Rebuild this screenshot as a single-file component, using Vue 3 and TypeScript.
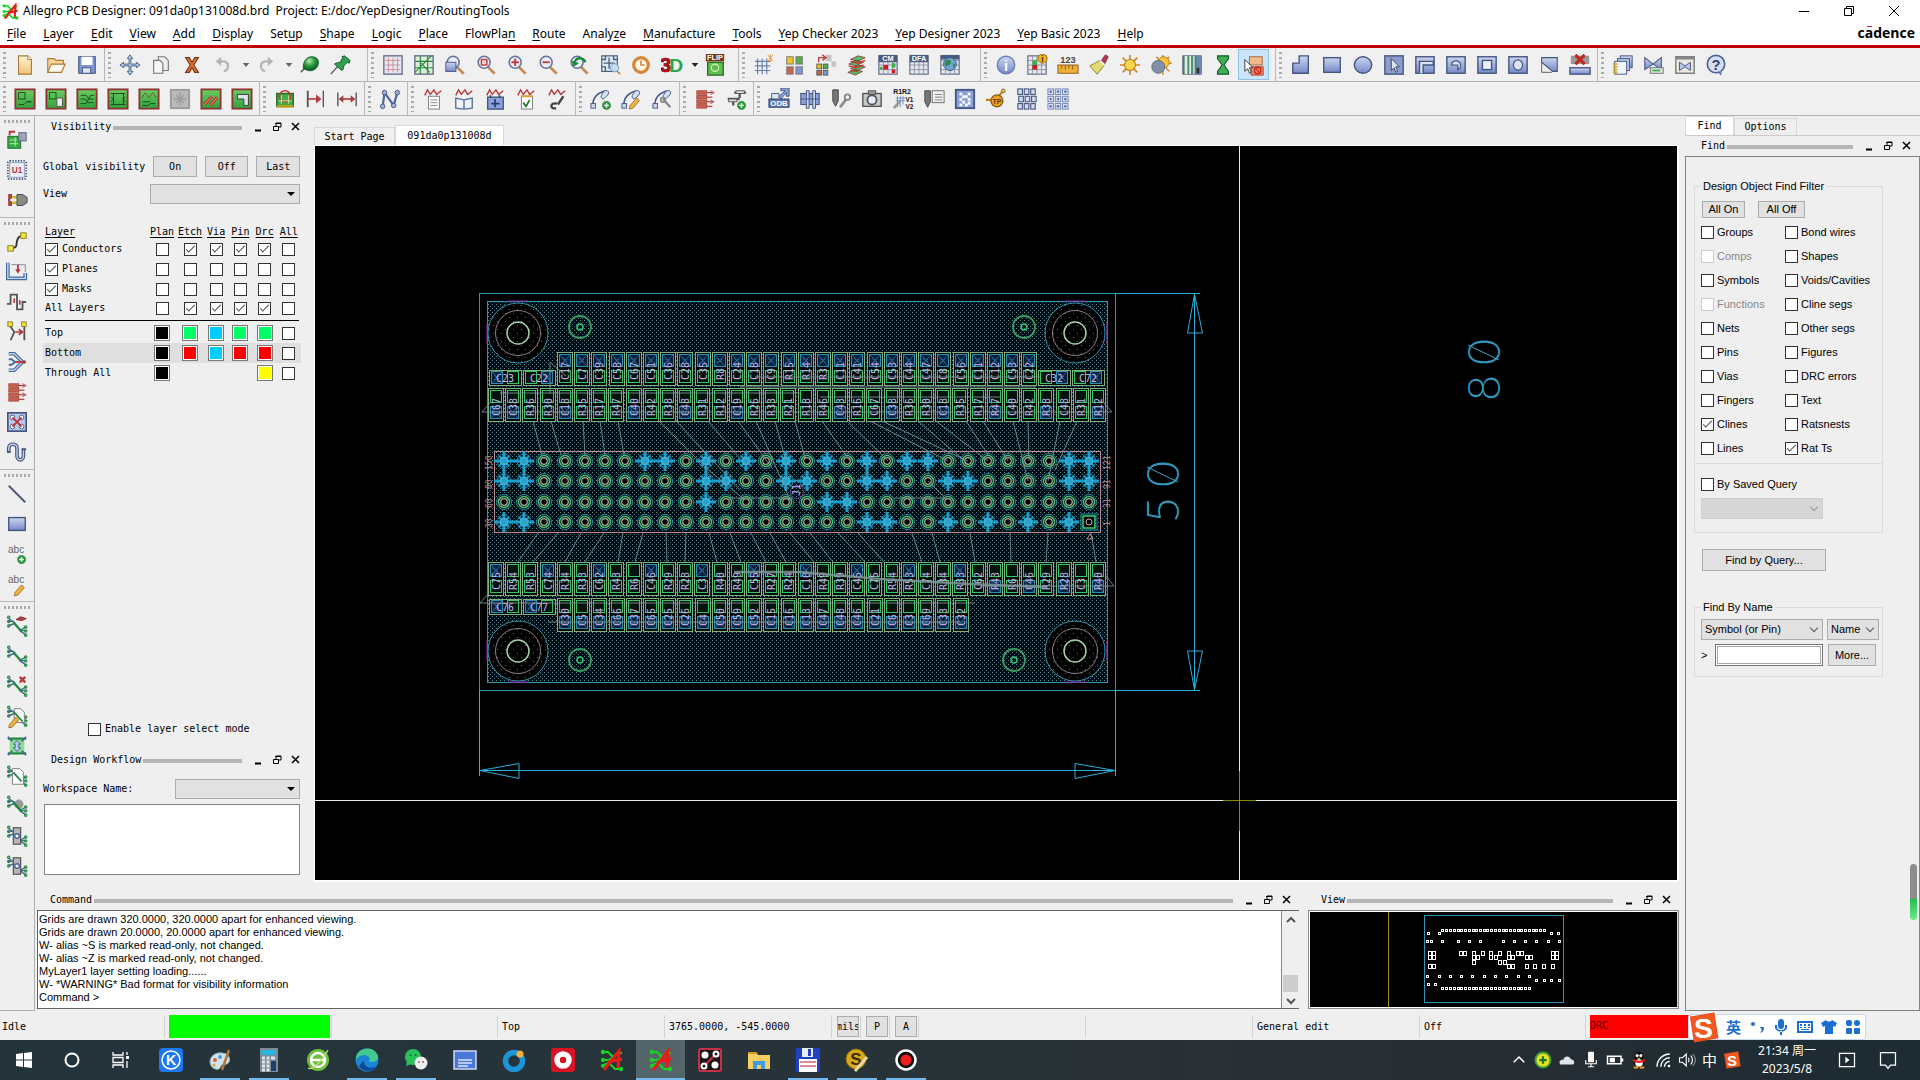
<script setup lang="ts">
import { ref } from 'vue'

/* ---------- small svg helpers for the icon set ---------- */
const R = (x: number, y: number, w: number, h: number, f = 'none', s = 'none', sw = 1) =>
  `<rect x="${x}" y="${y}" width="${w}" height="${h}" fill="${f}" stroke="${s}" stroke-width="${sw}"/>`
const P = (d: string, s = 'none', sw = 1, f = 'none') =>
  `<path d="${d}" fill="${f}" stroke="${s}" stroke-width="${sw}"/>`
const C = (x: number, y: number, r: number, f = 'none', s = 'none', sw = 1) =>
  `<circle cx="${x}" cy="${y}" r="${r}" fill="${f}" stroke="${s}" stroke-width="${sw}"/>`
const T = (x: number, y: number, t: string, z: number, f: string, w = 700) =>
  `<text x="${x}" y="${y}" font-size="${z}" fill="${f}" font-weight="${w}" text-anchor="middle" font-family="Liberation Sans, sans-serif">${t}</text>`

const BLU = 'url(#gBlue)'
const NAVY = '#44557f'
const RED = '#b23a3a'
const GRN = '#1f8a3a'
const pcb = R(1.5, 1.5, 21, 21, 'url(#gGreen)', '#8f3434', 2)
const lens = P('M13.500 13.500l8 8', '#c58a55', 3) + C(10, 9, 6.500, '#e9edf8', '#66749c', 1.700)
const plus = (x: number, y: number) => C(x, y, 4.500, '#2c9a3c', '#1b6e2b', 0.500) + P(`M${x - 2.500} ${y}h5M${x} ${y - 2.500}v5`, '#fff', 1.500)
const pencil = (x: number, y: number) => P(`M${x} ${y}l7-8 3 3-7 8-4 1z`, '#8a5a20', 0.800, '#f2b23a')
const wave = P('M3 8l3-6 3 5 4-5 3 5 5-4', RED, 1.500)
const sheet = R(7, 9, 12, 14, '#fff', '#777')
const grid = R(2, 2, 20, 20, '#e8e8ec', '#66708c', 1.300) + P('M2 7h20M2 12h20M2 17h20M7 2v20M12 2v20M17 2v20', '#8c93a6', 1)
const curve = P('M3 19C3 9 9 5 17 3', NAVY, 1.600) + R(1, 17, 5, 5, '#cdd6f0', NAVY) + P('M12 10c1-5 4-8 7-7s1 6-5 9z', NAVY, 1, '#d5ddf2')
const fan = (diag = GRN) =>
  P('M2 3l8 6M2 7h7M2 12l8-3', '#4b689c', 1.500) + P('M15 17h7M15 17l7-4M15 17l7 5', '#4b689c', 1.500) + P('M8 8l9 10', diag, 2.500) +
  [2.5, 7, 12].map(y => C(3, y, 1.300, 'none', GRN, 1.200)).join('') + [13, 17.5, 22].map(y => C(21.500, y, 1.300, 'none', GRN, 1.200)).join('')

const ic: Record<string, string> = {
  new: P('M5 2h10l4 4v16H5z', '#a97a35', 1.200, 'url(#gOrange)') + P('M15 2v4h4', '#a97a35', 1, '#fff'),
  open: P('M3 20V5h7l2 2h8v4', '#a97a35', 1.200, '#f6d59a') + P('M3 20l4-9h15l-4 9z', '#a97a35', 1.200, '#fffaf0'),
  save: R(3, 3, 18, 18, '#7d97d3', '#44557f', 1.200) + R(6, 3, 12, 9, '#fff') + R(7, 15, 9, 6, '#dfe4ef', '#44557f'),
  move: P('M12 1l3 4h-2v6h6V9l4 3-4 3v-2h-6v6h2l-3 4-3-4h2v-6H5v2l-4-3 4-3v2h6V5H9z', '#3f5c80', 1, '#bcd0e4'),
  copy: P('M9 3h7l4 4v11H9z', '#777', 1.200, '#eee') + P('M4 7h7l3 3v11H4z', '#777', 1.200, '#f6f6f6'),
  del: P('M5 4h4l3 5 3-5h4l-5 8 5 8h-4l-3-5-3 5H5l5-8z', '#7c3514', 1.200, '#d96f2e'),
  undo: P('M6 8h7c6 1 6 9 0 11', '#b5b5b5', 2.500) + P('M10 3L4 8l6 5z', 'none', 0, '#b5b5b5'),
  redo: P('M18 8h-7c-6 1-6 9 0 11', '#b5b5b5', 2.500) + P('M14 3l6 5-6 5z', 'none', 0, '#b5b5b5'),
  down: P('M7 9h10l-5 6z', 'none', 0, '#666'),
  downk: P('M7 9h10l-5 6z', 'none', 0, '#222'),
  ball: P('M3 20l6-6', '#555', 1.500) + P('M6 16c-1-4 1-13 9-13 6 0 8 4 7 8-1 6-7 8-11 7z', '#0c5c28', 1, 'url(#gBall)'),
  pin: P('M2 22l8-9', '#555', 1.500) + P('M6 11c2-2 5-1 6-2l3-5-1-1 3-1 6 5-1 3-2-1-4 4c0 2 0 4-2 5z', '#0c5c28', 1, '#2fa04e'),
  g1: R(2, 2, 20, 20, '#e9e6ee', '#66708c', 1.500) + P('M7 4v16M12 4v16M17 4v16M4 7h16M4 12h16M4 17h16', '#c98d95', 1),
  g2: R(2, 2, 20, 20, '#dfeadf', '#66708c', 1.500) + P('M2 8h20M2 15h20M8 2v20M16 2v20M2 20L20 2M9 10l9 10', '#2b8a3c', 1.300),
  z1: lens + R(2, 9, 11, 10, BLU, NAVY),
  z2: lens + R(7, 6, 6, 6, '#f4d4d8', '#c13838', 1.500),
  z3: lens + P('M6 9h8M10 5v8', '#c13838', 2),
  z4: lens + P('M6 9h8', '#c13838', 2),
  z5: lens + P('M7 10c2-8 10-6 12-1', GRN, 2.500) + P('M4 7l2 7 6-4z', 'none', 0, GRN),
  z6: R(3, 2, 17, 17, '#dde8f2', '#47617e', 1.300) + P('M11 4v12M5 10h12M3 6h4V2M20 6h-4V2M3 14h4v5', '#47617e', 1.500) + C(17, 15, 4.500, '#cbdcf2', '#6b9cc4', 1) + P('M20 19l3 3', '#c58a55', 2),
  z7: C(12, 12, 8, '#fff7e8', '#d6883a', 3.500) + P('M12 7v5h4', '#d6883a', 1.800),
  d3: `<text x="-1" y="20" font-size="22" font-weight="900" fill="#c00c1c" stroke="#7c0812" stroke-width="0.800" font-family="Liberation Sans, sans-serif">3</text><text x="9" y="20" font-size="21" font-weight="900" fill="#25a84a" font-family="Liberation Sans, sans-serif">D</text>`,
  flip: R(4, 9, 17, 14, '#5ec04e', '#2b6e2b', 1.500) + C(12, 15, 4, 'none', '#dff2c0', 1.200) + R(2, 0, 20, 8, '#7a3a14') + T(12, 7, 'FLIP', 8, '#fff'),
  grid: P('M2 8h17M2 13h17M2 18h17M5 5v17M10 5v17M15 5v17', '#6c80ae', 1.300) + P('M16 1l6 7M22 1l-6 7M19 0v9', '#e09a40', 1),
  q4: R(3, 3, 7, 8, '#e8c324', '#777') + R(13, 3, 7, 8, '#56ad4a', '#777') + R(3, 14, 7, 8, '#c4694b', '#777') + R(13, 14, 7, 8, '#8196d4', '#777'),
  q5: R(12, 1, 6, 7, '#c3c3c3') + R(18, 8, 5, 6, '#c3c3c3') + R(2, 11, 5, 5, '#e8c324', '#555') + R(9, 11, 5, 5, '#56ad4a', '#555') + R(2, 18, 5, 5, '#c4694b', '#555') + R(9, 18, 5, 5, '#8196d4', '#555') + P('M4 9V4h6M8 1l4 3-4 3', RED, 1.500),
  lay: P('M5 6l8-4 8 2-8 4zM3 11l8-4 8 2-8 4zM5 16l8-4 8 2-8 4zM2 20l8-3 8 2-8 4z', '#7e2a2a', 0.800, '#5fb869') + P('M5 8l8 2 8-3M3 13l8 2 8-3M5 18l8 1', '#c0392b', 1.500),
  cm: grid + R(2, 1, 20, 8, '#4c5c80') + T(12, 8, 'CM', 8, '#fff') + R(7, 12, 5, 5, '#c81e1e') + R(16, 17, 4, 4, '#c81e1e') + R(3, 14, 3, 3, '#3fae49') + R(16, 10, 4, 5, '#3fae49'),
  dfa: grid + R(2, 1, 20, 8, '#4c5c80') + T(12, 8, 'DFA', 8, '#fff'),
  globe: grid + R(2, 1, 20, 5, '#4c5c80') + C(12, 11, 7, '#6ea6d8', '#37587e') + P('M8 7c3-2 6 0 5 3s-4 1-4 4c-2-1-4-4-1-7zM15 10l3 2-2 4z', 'none', 0, '#2c8a44'),
  info: C(12, 12, 9.500, 'url(#gBlue)', '#6b7db4', 1.500) + T(12, 18, 'i', 16, '#fff'),
  info2: grid + R(7, 12, 5, 5, '#c81e1e') + R(7, 7, 5, 5, '#3fae49') + C(18, 5, 5, '#f2b21c', '#a4690e', 1) + T(18, 9, 'i', 9, '#333'),
  ruler: T(12, 10, '123', 10, '#444') + R(1, 12, 22, 9, '#f0ae34', '#8a5a1a') + P('M5 12v4M9 12v5M13 12v4M17 12v5', '#8a5a1a', 1),
  brush: P('M14 8l5-7 3 2-4 8z', '#7c2030', 1, '#b23a58') + P('M13 7l5 5-8 10-8-9z', '#8a7a2a', 1, '#e4dc70') + P('M13 7l5 5', '#eee', 2),
  sun: P('M12 1v22M1 12h22M4 4l16 16M20 4L4 20', '#c9842a', 1.800) + C(12, 12, 6, '#fbd54a', '#b9790e', 1.200),
  sun2: P('M14 1v22M4 10h20M7 3l14 16M21 3L7 17', '#c9842a', 1.500) + C(15, 9, 6, '#fbc53a', '#b9790e') + C(9, 14, 7, '#8190a8', '#59677f'),
  bars: R(2, 2, 20, 20, '#4f8a6e', '#47556f') + R(4, 2, 3, 20, '#dfeae6') + R(9, 2, 2, 20, '#dfeae6') + R(13, 2, 2, 20, '#c0d0e0') + R(17, 2, 5, 20, '#6c88b8') + R(17, 15, 3, 6, '#333'),
  hour: P('M6 2h12v3l-5 7 5 7v3H6v-3l5-7-5-7z', '#0f5c28', 1.200, '#3fae55'),
  sel: R(7, 3, 14, 9, '#efb98c', '#a26a44') + R(9, 14, 13, 9, '#e98a63', '#c0392b') + C(16, 18, 3.500, 'none', '#c8281e', 1.500) + P('M14 15.500l4 5', '#c8281e', 1.300) + P('M2 6l9 9-4 0 2 5-2 1-2-5-3 3z', '#333', 1, '#fff'),
  s1: P('M3 10h7V2h10v19H3z', NAVY, 1.500, BLU),
  s2: R(3, 4, 18, 16, BLU, NAVY, 1.500),
  s3: `<ellipse cx="12" cy="12" rx="9.500" ry="9" fill="url(#gBlue)" stroke="#44557f" stroke-width="1.500"/>`,
  s4: R(2, 2, 20, 20, '#8c9dcc', NAVY, 1.500) + P('M9 5v13l3-3 2 5 2-1-2-5h4z', '#33415f', 1, '#dce3f5'),
  s5: R(2, 3, 20, 18, BLU, NAVY, 1.500) + P('M6 21V8h15v4H10v9', NAVY, 1.500, '#dce3f5'),
  s6: R(2, 3, 20, 18, BLU, NAVY, 1.500) + P('M7 12a5 5 0 1 1 7 5v-5z', NAVY, 1.300, '#dce3f5'),
  s7: R(2, 3, 20, 18, BLU, NAVY, 1.500) + R(7, 7, 10, 10, '#eceff8', NAVY, 1.500),
  s8: R(2, 3, 20, 18, BLU, NAVY, 1.500) + `<ellipse cx="12" cy="12" rx="5" ry="5.500" fill="#dce3f5" stroke="#44557f" stroke-width="1.300"/>`,
  s9: P('M4 4h17v15h-5L4 9z', NAVY, 1.200, BLU) + P('M4 9v11h11', '#555', 1),
  s10: R(1, 15, 22, 7, BLU, NAVY, 1.500) + R(2, 2, 20, 9, '#999') + P('M7 1l10 10M17 1L7 11', '#c0281e', 3.500),
  bk: R(9, 2, 13, 13, BLU, NAVY) + R(6, 5, 13, 13, '#b9c6ea', NAVY) + R(3, 8, 13, 14, '#f2f4fb', NAVY) + P('M1 11h5M1 14h5M1 17h5M1 20h5', '#e0a81e', 1.800),
  bow: P('M2 4l9 7 9-7v13l-9-6-9 6z', NAVY, 1.200, BLU) + R(8, 15, 14, 6, '#eee', '#666') + R(10, 17, 9, 2, '#3fae49'),
  bow2: R(2, 3, 20, 18, '#ece7dc', '#777', 1.500) + R(2, 3, 20, 3, '#888') + P('M6 9l6 4 6-4v9l-6-4-6 4z', NAVY, 1, '#b9c6ea'),
  help: C(12, 11, 9.500, '#d6def2', '#4c6492', 1.800) + P('M15 19l2 4 1-5', '#4c6492', 1, '#9fb0da') + T(12, 17, '?', 16, '#2e4470'),
  p1: pcb + R(5, 5, 7, 7, 'none', '#164a1c', 1) + P('M5 18h6l3-3h5M14 15h5', '#164a1c', 1),
  p2: pcb + R(5, 5, 7, 7, 'none', '#164a1c', 1) + R(13, 11, 6, 9, '#eee', '#555'),
  p3: pcb + P('M5 8h6l3 4h5M5 12h5l3 4h6M5 17h6l5-9h4', '#164a1c', 1),
  p4: pcb + R(7, 6, 11, 12, 'none', '#164a1c', 1) + P('M4 6h4M16 6h4M4 18h4M16 18h4M4 10l3 2-3 3M20 10l-3 2 3 3', '#164a1c', 1),
  p5: pcb + P('M4 11l4-6 4 6 4-6 4 6', '#6a5a1c', 1) + P('M5 15h8M5 19h6l3-2h5', '#164a1c', 1),
  p6: R(2, 2, 20, 20, '#b9b9b9', '#9a9a9a', 2) + P('M12 5v14M5 12h14M8 8l8 8M16 8l-8 8', '#9c9c9c', 1.500),
  p7: pcb + P('M5 18l8-9M11 19l8-9', '#b23a2a', 3.500) + P('M5 18l8-9M11 19l8-9', '#f0a08a', 1),
  p8: pcb + P('M7 7h12v12h-5v-7H7z', '#333', 1, '#dfe3ef'),
  m1: R(3, 6, 18, 14, '#3fae49', '#1f6a2b', 1.500) + P('M3 20h18', '#b4a020', 3) + C(12, 9, 6, 'none', '#c0392b', 1.800) + P('M5 14h14M8 8v9M16 8v9', '#c8f0a0', 1),
  m2: P('M3 3v18', '#555', 2) + P('M20 3v18', '#555', 1.500) + P('M3 12h13', RED, 1.800) + P('M12 7l6 5-6 5z', 'none', 0, RED),
  m3: P('M2 5v15M22 5v15', '#555', 1.500) + P('M4 12h16', RED, 1.800) + P('M8 8l-5 4 5 4zM16 8l5 4-5 4z', 'none', 0, RED),
  nn: P('M4 20L6 5l10 14L20 5', '#54699c', 2.500) + C(4, 20, 2.500, '#9fb0da', NAVY) + C(6, 5, 2.500, '#9fb0da', NAVY) + C(16, 19, 2.500, '#9fb0da', NAVY) + C(20, 5, 2.500, '#9fb0da', NAVY),
  w1: sheet + P('M9 13h8M9 16h8M9 19h8', '#888', 1) + wave,
  w2: P('M3 11l9 2 9-2v11l-9 1-9-1zM12 13v10', '#52709c', 1.500, '#eef3fb') + wave,
  w3: R(4, 10, 17, 13, '#8ba2dc', '#44557f', 1.500) + P('M12 12v9M8 17h9M7 10V8M17 10V8', '#26396b', 1.800) + wave,
  w4: sheet + P('M9 16l3 4 4-7', '#2a7a2a', 2) + P('M7 9h12', '#d8a020', 2) + wave,
  w5: P('M19 9l-6 9M12 17c-8-2-8 7-1 5', '#444', 2.500) + wave,
  c1: curve + plus(18, 19), c2: curve + pencil(10, 19), c3: curve + P('M12 12l8 9', '#888', 2.500) + C(12, 13, 2.500, 'none', '#888', 1.800),
  rb: [3, 8, 13, 18].map(y => R(3, y, 11, 4, '#c9604f', '#9c3c30', 0.700) + P(`M14 ${y + 2}h6`, RED, 1.300)).join('') + P('M18 3l4 2-4 2M18 13l4 2-4 2', RED, 1),
  tt: P('M10 5h13M3 12h13M16 5v6M9 12v7', '#555', 2.500) + R(12, 3, 9, 3, '#ddd', '#555') + R(4, 12, 9, 3, '#ddd', '#555') + plus(18, 19),
  odb: P('M4 12V6h8v5', NAVY, 1, '#dfe5f5') + P('M12 9l7-6h-5V0h9v9h-3V5l-6 7z', NAVY, 1, '#8ba2dc') + R(1, 12, 22, 9, '#5d78b8', '#33415f') + T(12, 20, 'ODB', 8.500, '#fff'),
  o2: R(2, 6, 20, 12, '#8ba2dc', NAVY, 1.200) + R(8, 3, 3, 19, '#ccd6ee', NAVY) + R(15, 3, 3, 19, '#ccd6ee', NAVY) + P('M2 12h20', NAVY, 1),
  o3: P('M3 2h6v12l-3 6-3-6z', '#444', 1, '#777') + P('M11 21l7-9', '#888', 3) + C(19, 10, 3, 'none', '#888', 2),
  cam: R(2, 6, 20, 14, '#c9c9c9', '#555', 1.500) + R(8, 3, 8, 4, '#999', '#555') + C(12, 13, 5, '#e8eef8', '#555', 2),
  r12: T(11, 7, 'R1R2', 7.500, '#111') + T(19, 15, 'V1', 7, '#111') + T(19, 23, 'V2', 7, '#111') + P('M6 9v12M9 9v12M12 9v9M4 11h10M4 14h10', '#6c88c4', 1) + P('M2 22l7-8', '#999', 3),
  o6: P('M2 3h6v12l-3 6-3-6z', '#444', 1, '#777') + R(10, 3, 13, 13, '#f4f4f4', '#666') + P('M13 7h8M13 10h8M13 13h8', '#777', 1),
  o7: R(2, 2, 20, 20, '#8ba2dc', NAVY, 2) + [[6, 5], [15, 5], [9, 8], [12, 8], [6, 11], [15, 11], [9, 14], [15, 15], [6, 17], [12, 17]].map(([x, y]) => R(x, y, 3, 3, '#fff')).join(''),
  tp: P('M1 13h8M14 10l5-6', '#c8841c', 2.500) + C(20, 3, 2, '#f4c04c', '#8a5a1a') + C(13, 14, 6.500, '#f0a020', '#8a5a1a', 1.500) + T(13, 17, 'TP', 7.500, '#5c3200'),
  o9: [1, 9, 17].map((y, i) => [2, 9, 16].map(x => R(x + (i === 1 ? 1 : 0), y, 5, 6, '#d4dcf0', NAVY, 1.200)).join('')).join(''),
  o10: [4, 12, 20].map(y => [4, 12, 20].map(x => R(x - 3, y - 3, 6, 6, '#dfe5f5', '#6c7fb0', 1) + C(x, y, 1.500, '#5d78b8')).join('')).join(''),
  l1: R(2, 8, 14, 13, '#34a844', '#1c6a2b') + P('M4 12h8M4 16h9M10 9v10', '#b5f0a0', 1) + R(14, 4, 8, 9, '#9aa6ba', '#5a6478') + P('M10 3H4v4', RED, 2),
  l2: R(4, 4, 16, 16, '#eceef5', '#8a98c0', 1) + `<rect x="2" y="2" width="20" height="20" rx="2" fill="none" stroke="#44557f" stroke-width="2" stroke-dasharray="1.500 1.500"/>` + T(12, 15, 'U1', 9, RED),
  l3: P('M6 6H3v12h3v-4H4v-4h2z', '#8a2a2a', 1, '#d94b45') + P('M7 9h5M7 15h5', '#d8b020', 2.500) + P('M12 6h6l5 3v6l-5 3h-6z', '#444', 1, '#8a8a8a'),
  l4: P('M5 19c8 0 6-4 7-8s2-6 8-6', '#333', 2) + R(2, 16, 6, 6, '#f4e23c', '#8a8020') + R(16, 2, 6, 6, '#f4e23c', '#8a8020'),
  l5: P('M2 2v17h19v-6', '#456a9c', 4) + P('M2 2v17h19v-6', '#c4d6f0', 1.500) + P('M6 4h15v8', '#789', 1) + P('M13 4v6', RED, 2) + P('M10 9l3 5 3-5z', 'none', 0, RED),
  l6: P('M1 14h4V4h7v16h6v-8h4', '#555', 2) + P('M9 13V8M15 10v5', RED, 1.800),
  l7: P('M4 5l5 7-4 9M20 5v16', '#555', 2) + R(2, 1, 5, 5, '#f4e23c', '#8a8020') + R(17, 1, 5, 5, '#f4e23c', '#8a8020') + P('M10 12h7M14 9l4 3-4 3', RED, 1.800),
  l8: P('M3 3h6l9 9-9 9H3', '#456a9c', 4) + P('M3 3h6l9 9-9 9H3', '#b8ccec', 1.500) + P('M3 9h3l4 3-4 3H3', '#456a9c', 2) + P('M10 12h9', RED, 2) + C(20, 12, 2, RED),
  l10: R(2, 2, 20, 20, '#b8c6ea', NAVY, 1.800) + C(7, 7, 2.500, '#fff', NAVY) + C(17, 7, 2.500, '#fff', NAVY) + C(7, 17, 2.500, '#fff', NAVY) + C(17, 17, 2.500, '#fff', NAVY) + P('M7 7l10 10M17 7L7 17', '#c03030', 2),
  l11: P('M3 12V8c0-6 9-6 9 0v8c0 6 7 6 7 0V9', NAVY, 4) + P('M3 12V8c0-6 9-6 9 0v8c0 6 7 6 7 0V9', '#c4d0ea', 1.500) + P('M1 12h4M17 9h5', NAVY, 2),
  ln: P('M3 3l18 18', '#4a5470', 2), rc: R(3, 5, 18, 14, BLU, NAVY, 1.500),
  ab1: T(11, 11, 'abc', 11, '#666', 400) + plus(17, 18), ab2: T(11, 11, 'abc', 11, '#666', 400) + pencil(10, 21),
  r1: fan() + P('M11 5l5-3 6 2-5 2z', '#7c2020', 1, '#b84848'), r2: fan(), r3: fan() + P('M15 2l6 6M21 2l-6 6', '#b23a3a', 2.500),
  r4: fan() + P('M9 4h7l4 4v11H9z', '#777', 1, '#fff') + P('M9 8l9 10', GRN, 2) + pencil(4, 21),
  r5: R(4, 5, 16, 14, '#8fe08f') + P('M2 4h20M2 20h20', GRN, 2.500) + P('M12 6l4 4h-2v4h2l-4 4-4-4h2v-4H8z', '#3f5c90', 1, '#b5c8ee') + P('M2 2l5 5M22 2l-5 5M2 22l5-5M22 22l-5-5', '#4b689c', 1.800),
  r6: fan() + P('M7 4h8l4 4v13H7z', '#777', 1, '#fff') + P('M8 8l9 10', GRN, 2), r7: fan() + C(14, 10, 5, '#9a9a9a') + P('M8 8l9 10', GRN, 2.500),
  r8: fan() + R(8, 3, 8, 18, '#b5b5b5', '#555', 1.300) + C(12, 12, 2.500, '#fff', '#44619c', 1.500),
  allegro: P('M1 4l7 0 5 5 4-4 5 0M1 12h8l6-4M1 18l8-3 6 6h7', '#16d420', 2.200) + C(3, 4, 2.200, '#16d420') + C(3, 12, 2.200, '#16d420') + C(3, 18, 2, '#16d420') + C(21, 21, 2.200, '#16d420') + P('M4 22L19 3l-1 17M8 14l14-3', '#e81a1a', 3)
}
ic.l9 = ic.rb
ic.r9 = ic.r8

interface Group { w: number; icons: string[] }
const bar1: Group[] = [
  { w: 105, icons: ['new', 'open', 'save'] },
  { w: 263, icons: ['move', 'copy', 'del', 'undo', 'down', 'redo', 'down', 'ball', 'pin'] },
  { w: 371, icons: ['g1', 'g2', 'z1', 'z2', 'z3', 'z4', 'z5', 'z6', 'z7', 'd3', 'downk', 'flip'] },
  { w: 242, icons: ['grid', 'q4', 'q5', 'lay', 'cm', 'dfa', 'globe'] },
  { w: 295, icons: ['info', 'info2', 'ruler', 'brush', 'sun', 'sun2', 'bars', 'hour', 'sel'] },
  { w: 322, icons: ['s1', 's2', 's3', 's4', 's5', 's6', 's7', 's8', 's9', 's10'] },
  { w: 0, icons: ['bk', 'bow', 'bow2', 'help'] }
]
const bar2: Group[] = [
  { w: 260, icons: ['p1', 'p2', 'p3', 'p4', 'p5', 'p6', 'p7', 'p8'] },
  { w: 105, icons: ['m1', 'm2', 'm3'] },
  { w: 43, icons: ['nn'] },
  { w: 168, icons: ['w1', 'w2', 'w3', 'w4', 'w5'] },
  { w: 104, icons: ['c1', 'c2', 'c3'] },
  { w: 74, icons: ['rb', 'tt'] },
  { w: 0, icons: ['odb', 'o2', 'o3', 'cam', 'r12', 'o6', 'o7', 'tp', 'o9', 'o10'] }
]
const side: string[][] = [
  ['l1', 'l2', 'l3'],
  ['l4', 'l5', 'l6', 'l7', 'l8', 'l9', 'l10', 'l11'],
  ['ln', 'rc', 'ab1', 'ab2'],
  ['r1', 'r2', 'r3', 'r4', 'r5', 'r6', 'r7', 'r8', 'r9']
]

/* menu entries: text before, mnemonic, text after */
const menus: [string, string, string][] = [
  ['', 'F', 'ile'], ['', 'L', 'ayer'], ['', 'E', 'dit'], ['', 'V', 'iew'], ['', 'A', 'dd'], ['', 'D', 'isplay'], ['Set', 'u', 'p'],
  ['', 'S', 'hape'], ['', 'L', 'ogic'], ['', 'P', 'lace'], ['FlowPla', 'n', ''], ['', 'R', 'oute'], ['Analy', 'z', 'e'],
  ['', 'M', 'anufacture'], ['', 'T', 'ools'], ['', 'Y', 'ep Checker 2023'], ['', 'Y', 'ep Designer 2023'], ['', 'Y', 'ep Basic 2023'], ['', 'H', 'elp']
]

/* ---------- visibility panel ---------- */
const cols = ['Plan', 'Etch', 'Via', 'Pin', 'Drc', 'All']
const classes = ref([
  { name: 'Conductors', own: true, on: [false, true, true, true, true, false] },
  { name: 'Planes', own: true, on: [false, false, false, false, false, false] },
  { name: 'Masks', own: true, on: [false, false, false, false, false, false] },
  { name: 'All Layers', own: null as boolean | null, on: [false, true, true, true, true, false] }
])
const layers = [
  { name: 'Top', c: ['#000', '#00ff66', '#0cf', '#00ff66', '#00ff66'] },
  { name: 'Bottom', c: ['#000', '#f00', '#0cf', '#f00', '#f00'] },
  { name: 'Through All', c: ['#000', '', '', '', '#ff0'] }
]

/* ---------- find panel ---------- */
const finds = ref([
  ['Groups', 'Bond wires'], ['Comps', 'Shapes'], ['Symbols', 'Voids/Cavities'], ['Functions', 'Cline segs'], ['Nets', 'Other segs'],
  ['Pins', 'Figures'], ['Vias', 'DRC errors'], ['Fingers', 'Text'], ['Clines', 'Ratsnests'], ['Lines', 'Rat Ts']
].flat().map(name => ({ name, on: name === 'Clines' || name === 'Rat Ts', off: name === 'Comps' || name === 'Functions' })))

/* ---------- board ---------- */
interface Part { x: number; y: number; w: number; h: number; pads: { x: number; y: number; blue: boolean }[]; label: string }
const pitch = 17.2
const vParts = (x0: number, y: number, n: number, names: string[], top: (i: number) => boolean, bot: (i: number) => boolean): Part[] =>
  Array.from({ length: n }, (_, i) => {
    const x = Math.round(x0 + i * pitch)
    return { x, y, w: 15, h: 33, label: names[i % names.length], pads: [{ x: x + 2, y: y + 2, blue: top(i) }, { x: x + 2, y: y + 18, blue: bot(i) }] }
  })
const hPart = (x: number, y: number, label: string, a: boolean, b: boolean): Part =>
  ({ x, y, w: 32, h: 15, label, pads: [{ x: x + 2, y: y + 1, blue: a }, { x: x + 18, y: y + 1, blue: b }] })
const never = () => false
const blueB = [0, 1, 4, 8, 11, 14, 20, 23, 26, 29, 32, 35]
const parts: Part[] = [
  ...vParts(557, 352, 28, ['C17', 'C7', 'C39', 'C58', 'C67', 'C51', 'C36', 'C28', 'C35', 'R8', 'C24', 'C18', 'C9', 'R15', 'R14', 'R3', 'C11', 'C41', 'C54', 'C53', 'C44', 'C47', 'C8', 'C56', 'C11', 'C12', 'C53', 'C22'], () => true, never),
  ...vParts(488, 388, 36, ['C67', 'C38', 'R36', 'R30', 'C18', 'R35', 'R17', 'R47', 'C40', 'R42', 'R38', 'C48', 'R31', 'R12', 'C19', 'R26', 'R33', 'R21', 'R18', 'R46', 'C43', 'R16'], never, i => blueB.includes(i)),
  ...vParts(488, 562, 36, ['C75', 'R54', 'R53', 'C74', 'R34', 'R33', 'C62', 'R43', 'R6', 'C46', 'R29', 'R28', 'C3', 'R40', 'R49', 'C55', 'R27', 'R24', 'C10', 'R49', 'R39', 'C45'], i => i < 28 && i % 3 === 0, i => i > 28 && i % 2 === 1),
  ...vParts(557, 598, 24, ['C30', 'C5', 'C34', 'C66', 'C37', 'C65', 'C25', 'C26', 'C4', 'C50', 'C59', 'C52', 'C15', 'C16', 'C13', 'C47', 'C48', 'C46', 'C21', 'C6', 'C3', 'C69', 'C33', 'C32'], never, () => true),
  hPart(489, 370, 'C23', true, false), hPart(523, 370, 'C22', false, true), hPart(1038, 370, 'C32', false, true), hPart(1072, 370, 'C72', false, true),
  hPart(489, 599, 'C76', true, false), hPart(523, 599, 'C77', true, false)
]
const pinRows = [461, 481, 502, 522]
const planePins = [[0, 1, 7, 8, 10, 12, 14, 16, 18, 20, 21, 28, 29], [0, 1, 10, 11, 14, 15, 18, 19, 22, 23, 28, 29], [10, 16, 17], [0, 1, 18, 19, 22, 24, 26, 28]]
const pins = pinRows.flatMap((y, r) => Array.from({ length: 30 }, (_, i) => ({ x: Math.round(504 + i * 20.17), y, plane: planePins[r].includes(i), square: r === 3 && i === 29 })))
const holes = [[518, 333], [1075, 333], [518, 651], [1075, 651]]
const marks = [[580, 327], [1024, 327], [580, 660], [1014, 660]]
const rats: number[][] = [
  [533, 421, 542, 455], [551, 421, 561, 455], [583, 421, 585, 455], [600, 421, 605, 455], [618, 421, 624, 455], [659, 421, 706, 468], [676, 421, 740, 490],
  [708, 421, 742, 461], [738, 421, 772, 468], [756, 421, 790, 500], [775, 421, 786, 461], [795, 421, 805, 458], [822, 421, 850, 461], [847, 421, 888, 461],
  [870, 421, 948, 461], [882, 421, 968, 461], [918, 421, 968, 464], [936, 421, 988, 461], [966, 421, 988, 455], [983, 421, 1008, 461], [1013, 421, 1028, 481],
  [1028, 421, 1029, 461], [1060, 421, 1048, 481], [1077, 421, 1055, 470],
  [538, 533, 518, 562], [558, 533, 533, 562], [581, 533, 565, 562], [604, 533, 585, 562], [623, 533, 618, 562], [643, 533, 635, 562], [666, 533, 667, 562],
  [686, 533, 685, 562], [709, 533, 717, 562], [730, 533, 741, 562], [751, 533, 766, 562], [770, 533, 786, 562], [790, 533, 814, 562], [810, 533, 833, 562],
  [838, 533, 865, 562], [858, 533, 884, 562], [912, 533, 922, 562], [932, 533, 940, 562], [970, 533, 975, 562], [1010, 533, 1011, 562], [1048, 533, 1046, 562],
  [1091, 533, 1096, 562], [482, 412, 1112, 412], [482, 412, 490, 403], [1112, 412, 1104, 403], [480, 603, 975, 603], [480, 603, 488, 594], [548, 622, 960, 622],
  [980, 586, 1114, 586], [1114, 586, 1106, 576], [550, 362, 550, 394], [550, 362, 566, 376], [755, 377, 1040, 377], [740, 387, 1036, 387], [500, 393, 800, 393], [820, 397, 1000, 397],
  [730, 498, 792, 498], [895, 498, 946, 498], [706, 468, 745, 500], [928, 481, 945, 498]
]
const thick = 'M734 572L800 572L880 579L970 584L1046 587'
const miniPads = [
  ...parts.flatMap(p => p.pads.filter(d => d.blue).map(d => ({ x: d.x, y: d.y, w: 2, h: 2 }))),
  ...pins.filter(p => p.plane).map(p => ({ x: p.x - 8, y: p.y - 7, w: 3, h: 4 }))
].map(d => ({ ...d, x: Math.round(115 + (d.x - 479) * 0.2184), y: Math.round(2 + (d.y - 293) * 0.2217) }))

const log = [
  'Grids are drawn 320.0000, 320.0000 apart for enhanced viewing.', 'Grids are drawn 20.0000, 20.0000 apart for enhanced viewing.',
  'W- alias ~S is marked read-only, not changed.', 'W- alias ~Z is marked read-only, not changed.', 'MyLayer1 layer setting loading......',
  'W- *WARNING* Bad format for visibility information', 'Command >'
].join('\n')

/* ---------- taskbar ---------- */
const W = '#fff'
const tasks = [
  { n: 'start', s: P('M4 6l7-1v6.500H4zM12 5l8-1v7.500h-8zM4 12.500h7V19l-7-1zM12 12.500h8V20l-8-1z', 'none', 0, W) },
  { n: 'search', s: C(12, 12, 6.500, 'none', W, 2) },
  { n: 'views', s: P('M4 4v3h10V4M4 20v-3h10v3M4 9.500h10v5H4zM18 4v3M18 13v7', W, 1.300) + R(17, 8, 3, 3, W) },
  { n: 'kook', s: `<rect x="0" y="0" width="24" height="24" rx="4" fill="#1e78f0"/>` + C(12, 12, 9, 'none', W, 1.500) + T(12, 17, 'K', 14, W) },
  { n: 'paint', run: 1, s: P('M2 14c0-6 6-10 12-9 6 0 9 5 7 9s-7 1-8 4-3 4-6 3-5-4-5-7z', '#8aa', 1, '#cfe3ea') + C(7, 12, 2, '#e05a4a') + C(12, 9, 2, '#4a9ae0') + C(6, 17, 1.500, '#e0a030') + P('M14 22l7-20', '#b8743a', 2.500) },
  { n: 'calc', run: 1, s: R(3, 0, 18, 24, '#7d8c96') + R(5, 2, 14, 5, '#2ab4e0') + P('M5 10h3M9.500 10h3M5 14h3M9.500 14h3M5 18h3M9.500 18h3M5 22h3M9.500 22h3M14 10h4', '#dfe6ea', 3) + R(14, 13, 5, 10, '#1d3f70') },
  { n: 'browser', s: C(12, 12, 11, '#6cbf36') + C(12, 12, 7, 'none', W, 2.500) + P('M6 12h12', W, 2.500) + P('M2 20C8 24 20 6 22 2', '#b8e080', 1.500) },
  { n: 'edge', run: 1, s: C(12, 12, 11.500, '#1a86d4') + P('M1 9C4-2 20-2 23 8c1 6-8 7-9 5 2-3-1-6-5-6-4 0-8 3-8 6z', 'none', 0, '#43c98f') + P('M9 12c-1 6 6 10 13 6-4 6-14 7-18 0', 'none', 0, '#0c4a98') },
  { n: 'wechat', run: 1, s: C(9, 9, 8, '#2bc15a') + P('M3 13l-1 5 5-2z', 'none', 0, '#2bc15a') + C(17, 15, 6.500, '#eee') + C(6.500, 7, 1, '#174') + C(11.500, 7, 1, '#174') + C(15, 14, 1, '#777') + C(19, 14, 1, '#777') },
  { n: 'notes', s: R(1, 3, 22, 18, '#4c78d8', '#cddaf6', 1.500) + P('M5 12h14M5 15h14M5 18h10', '#dbe6ff', 1.300) },
  { n: 'cortex', s: C(12, 13, 8.500, 'none', '#1c94d8', 5.500) + C(18, 6, 3.500, '#f4b03a') },
  { n: 'hex', s: `<rect x="0" y="0" width="24" height="24" rx="3" fill="#d81424"/>` + C(12, 12, 6, 'none', W, 5.500) },
  { n: 'allegro', s: ic.allegro },
  { n: 'allegro2', run: 1, act: 1, s: ic.allegro },
  { n: 'pads', s: `<rect x="1" y="1" width="22" height="22" rx="2" fill="#1c1418" stroke="#c83048" stroke-width="2"/>` + P('M6 18L18 6', '#c83048', 2) + C(7, 7, 3.500, W) + C(17, 17, 3.500, W) + C(18, 6, 2.500, '#222', W, 2) + C(6, 18, 2.500, '#222', W, 2) },
  { n: 'explorer', s: P('M1 4h8l2 3h12v14H1z', 'none', 0, '#f6cf60') + P('M1 4h8l2 2H1z', 'none', 0, '#d89a20') + P('M6 21v-8h12v8h-4v-4h-4v4z', 'none', 0, '#3f9ce0') },
  { n: 'floppy', run: 1, s: R(0, 0, 24, 24, '#2040c0') + R(6, 0, 11, 9, '#e8ecf4') + R(12, 1, 3, 7, '#2040c0') + R(3, 11, 18, 13, '#fff') + P('M4 14h16M4 18h16', '#e08a94', 2) },
  { n: 'coin', run: 1, s: C(11, 11, 10, '#d8aa1a', '#8c6a0a') + T(11, 17, 'S', 17, '#3c2c04') + P('M10 23l12-14', '#e8d8a0', 3) },
  { n: 'record', run: 1, s: C(12, 12, 9.500, '#111', W, 2.500) + C(12, 12, 5.500, '#f02020') }
]
const sogou = P('M2 4l18-3 3 19-18 3z', '#e8501c', 1, '#f05a22')
const tray = [
  P('M5 15l7-7 7 7', W, 2),
  C(12, 12, 10, '#e8e020', '#38a03a', 2.500) + P('M7 12h10M12 7v10', '#187a28', 3),
  P('M3 18c-3-5 2-7 4-6 1-6 9-6 10-1 5 0 6 6 3 7z', 'none', 0, '#dfe4e8'),
  `<rect x="8" y="1" width="8" height="14" rx="1" fill="#fff"/>` + P('M5 12v5h14v-5M12 17v4M8 21h8', W, 1.500),
  R(2, 7, 18, 10, 'none', W, 2) + R(5, 9, 7, 6, W) + R(20, 10, 3, 4, W),
  `<ellipse cx="12" cy="13" rx="8" ry="9" fill="#111"/>` + C(12, 7, 6, '#111') + C(9.500, 6, 2, W) + C(14.500, 6, 2, W) + P('M9 9h6l-3 2z', 'none', 0, '#f0a020') + `<ellipse cx="12" cy="16" rx="5" ry="5" fill="#fff"/>` + P('M4 12c5 3 11 3 16 0', '#e02020', 3) + P('M5 22h6M13 22h6', '#f0a020', 2.500),
  P('M4 21A17 17 0 0 1 21 4M9 21A12 12 0 0 1 21 9M14 21a7 7 0 0 1 7-7', W, 1.800) + C(20, 20, 1.800, W),
  P('M2 9h4l5-5v16l-5-5H2z', W, 1.500) + P('M14 9c1 2 1 4 0 6M17 6c3 4 3 8 0 12', W, 1.500) + P('M20 4c4 5 4 11 0 16', '#8a949a', 1.500)
]
</script>

<template>
  <div class="app">
    <svg class="defs" width="0" height="0" aria-hidden="true">
      <defs>
        <linearGradient id="gBlue" x1="0" y1="0" x2="0" y2="1"><stop offset="0" stop-color="#cdd6f0" /><stop offset="1" stop-color="#7589c6" /></linearGradient>
        <linearGradient id="gGreen" x1="0" y1="0" x2="0" y2="1"><stop offset="0" stop-color="#6ecb62" /><stop offset="1" stop-color="#2ea23c" /></linearGradient>
        <linearGradient id="gOrange" x1="0" y1="0" x2="0" y2="1"><stop offset="0" stop-color="#fff3d8" /><stop offset="1" stop-color="#f2c377" /></linearGradient>
        <radialGradient id="gBall" cx="0.400" cy="0.300" r="0.700"><stop offset="0" stop-color="#b2efb0" /><stop offset="0.500" stop-color="#2f9a3c" /><stop offset="1" stop-color="#0a5a22" /></radialGradient>
      </defs>
    </svg>

    <header class="title">
      <svg class="logo" viewBox="0 0 24 24" v-html="ic.allegro"></svg>
      <h1>Allegro PCB Designer: 091da0p131008d.brd&nbsp; Project: E:/doc/YepDesigner/RoutingTools</h1>
      <div class="winbtns">
        <button aria-label="Minimize"><svg viewBox="0 0 12 12"><path d="M1 6.500h10" /></svg></button>
        <button aria-label="Restore"><svg viewBox="0 0 12 12"><path d="M1.500 3.500h7v7h-7zM3.500 3.500v-2h7v7h-2" /></svg></button>
        <button aria-label="Close"><svg viewBox="0 0 12 12"><path d="M1 1l10 10M11 1L1 11" /></svg></button>
      </div>
    </header>
    <nav class="menu">
      <a v-for="(m, i) in menus" :key="i" href="#">{{ m[0] }}<u>{{ m[1] }}</u>{{ m[2] }}</a>
      <span class="brand">c<i>a</i>dence</span>
    </nav>

    <div v-for="(bar, b) in [bar1, bar2]" :key="b" class="bar">
      <div v-for="(g, i) in bar" :key="i" class="group" :style="g.w ? { width: g.w + 'px' } : {}">
        <span class="grip"></span>
        <button v-for="(n, k) in g.icons" :key="k" :class="{ narrow: n.startsWith('down'), hot: n === 'sel' }" :aria-label="n">
          <svg viewBox="0 0 24 24" v-html="ic[n]"></svg>
        </button>
      </div>
    </div>

    <main class="main">
      <aside class="side">
        <div v-for="(s, i) in side" :key="i" class="sgroup">
          <span class="hgrip"></span>
          <button v-for="n in s" :key="n" :aria-label="n"><svg viewBox="0 0 24 24" v-html="ic[n]"></svg></button>
        </div>
      </aside>

      <div class="center">
        <div class="upper">
          <section class="dock">
            <div class="dtitle"><span>Visibility</span><i class="rail"></i>
              <svg class="dbtn" viewBox="0 0 48 10"><path d="M1 8.500h6" stroke-width="2" /><path d="M19.500 4.500h5v4h-5zM22 4v-3h5v4h-2M21 1.500h6" /><path d="M38 1l7 7M45 1l-7 7" stroke-width="1.500" /></svg>
            </div>
            <div class="gv"><span>Global visibility</span><button>On</button><button>Off</button><button>Last</button></div>
            <div class="vw"><label for="view">View</label><span class="combo"><select id="view"><option></option></select></span></div>
            <table class="vis">
              <colgroup><col class="c0" /><col class="c1" /><col class="c1" /><col class="c2" /><col class="c2" /><col class="c2" /><col class="c2" /></colgroup>
              <thead><tr><th class="l">Layer</th><th v-for="c in cols" :key="c">{{ c }}</th></tr></thead>
              <tbody>
                <tr v-for="(r, i) in classes" :key="r.name" :class="{ last: i === 3 }">
                  <td class="l"><label v-if="r.own !== null"><input v-model="r.own" type="checkbox" />{{ r.name }}</label><template v-else>{{ r.name }}</template></td>
                  <td v-for="(_, k) in r.on" :key="k"><input v-model="r.on[k]" type="checkbox" :aria-label="r.name + ' ' + cols[k]" /></td>
                </tr>
                <tr class="rule"><td colspan="7"><hr /></td></tr>
                <tr v-for="r in layers" :key="r.name" :class="{ cur: r.name === 'Bottom' }">
                  <td class="l">{{ r.name }}</td>
                  <td v-for="(c, k) in r.c" :key="k"><i v-if="c" class="sw" :style="{ background: c }"></i></td>
                  <td><input type="checkbox" :aria-label="r.name + ' All'" /></td>
                </tr>
              </tbody>
            </table>
            <label class="els"><input type="checkbox" />Enable layer select mode</label>
            <div class="dtitle"><span>Design Workflow</span><i class="rail"></i>
              <svg class="dbtn" viewBox="0 0 48 10"><path d="M1 8.500h6" stroke-width="2" /><path d="M19.500 4.500h5v4h-5zM22 4v-3h5v4h-2M21 1.500h6" /><path d="M38 1l7 7M45 1l-7 7" stroke-width="1.500" /></svg>
            </div>
            <div class="ws"><label for="ws">Workspace Name:</label><span class="combo"><select id="ws"><option></option></select></span></div>
            <textarea class="wsbox" aria-label="Workflow"></textarea>
          </section>

          <section class="design">
            <div class="tabs"><button>Start Page</button><button class="on">091da0p131008d</button></div>
            <div class="canvas">
              <svg width="100%" height="100%">
                <defs>
                  <pattern id="mesh" width="4" height="4" patternUnits="userSpaceOnUse"><rect width="4" height="4" fill="#000a12" /><rect width="1" height="1" fill="#568c84" /><rect x="2" y="2" width="1" height="1" fill="#3a7484" /></pattern>
                  <pattern id="sparse" width="8" height="8" patternUnits="userSpaceOnUse"><rect width="8" height="8" fill="#000" /><rect x="1" y="1" width="1" height="1" fill="#2f7a56" /><rect x="5" y="5" width="1" height="1" fill="#2f7a56" /></pattern>
                </defs>
                <g transform="translate(-315 -146)">
                  <g shape-rendering="crispEdges">
                    <rect x="479" y="293" width="636" height="397" class="ol" />
                    <rect x="487" y="301" width="620" height="381" fill="url(#mesh)" stroke="#2f93b4" />
                  </g>
                  <g v-for="(h, i) in holes" :key="'h' + i" fill="none">
                    <circle :cx="h[0]" :cy="h[1]" r="30" fill="url(#sparse)" stroke="#2f93a8" />
                    <circle :cx="h[0]" :cy="h[1]" r="22.500" stroke="#8c8088" />
                    <circle :cx="h[0]" :cy="h[1]" r="11" stroke="#a5cfa8" stroke-width="1.500" />
                    <path :d="`M${h[0] - 10} ${h[1] < 500 ? 301 : 682}h20M${h[0] < 800 ? 487 : 1107} ${h[1] - 10}v20`" stroke="#a01cb0" />
                  </g>
                  <g v-for="(m, i) in marks" :key="'m' + i" fill="none">
                    <circle :cx="m[0]" :cy="m[1]" r="11" stroke="#3a9a64" stroke-width="1.800" /><circle :cx="m[0]" :cy="m[1]" r="3" stroke="#2fc878" stroke-width="1.500" />
                  </g>
                  <g v-for="(p, i) in parts" :key="'p' + i" shape-rendering="crispEdges">
                    <rect :x="p.x + 0.500" :y="p.y + 0.500" :width="p.w" :height="p.h" fill="#020805" stroke="#84b07e" />
                    <template v-for="(d, k) in p.pads" :key="k">
                      <rect :x="d.x + 0.500" :y="d.y + 0.500" width="11" height="12" :fill="d.blue ? '#08203a' : '#04140c'" :stroke="d.blue ? '#2390b8' : '#2fc86a'" stroke-width="1.500" />
                      <path v-if="d.blue" :d="`M${d.x + 1} ${d.y + 1}l10 11M${d.x + 11} ${d.y + 1}l-10 11`" stroke="#205c88" fill="none" />
                    </template>
                    <text v-if="p.w < 20" :transform="`translate(${p.x + 12} ${p.y + 28}) rotate(-90)`" class="rd">{{ p.label }}</text>
                    <text v-else :x="p.x + 7" :y="p.y + 12" class="rd">{{ p.label }}</text>
                  </g>
                  <rect x="494.500" y="451.500" width="606" height="81" fill="none" stroke="#c08a90" />
                  <g v-for="(p, i) in pins" :key="'n' + i" :transform="`translate(${p.x} ${p.y})`">
                    <template v-if="p.square"><rect x="-8" y="-8" width="16" height="16" fill="#000" stroke="#1c9ab8" /><rect x="-6" y="-6" width="12" height="12" fill="#000" stroke="#3fd070" stroke-width="1.500" /><circle r="3" fill="none" stroke="#c8b0b0" /></template>
                    <template v-else-if="p.plane"><circle r="7" fill="none" stroke="#1684a8" /><path d="M-10-1.500h20v3h-20zM-1.500-10h3v20h-3zM-6-6l6 3 6-3-3 6 3 6-6-3-6 3 3-6z" fill="#15a0d0" /><circle r="3.500" fill="#22a2cc" stroke="#5ab4d0" /></template>
                    <template v-else><circle r="7.500" fill="#000c10" stroke="#1f8aa0" /><circle r="5.500" fill="#000" stroke="#48c070" stroke-width="1.500" /><circle r="3.300" fill="#000" stroke="#b0a8a0" stroke-width="1.200" /></template>
                  </g>
                  <g fill="none" stroke="#7f9498" stroke-opacity="0.850">
                    <path v-for="(l, i) in rats" :key="'r' + i" :d="`M${l[0]} ${l[1]}L${l[2]} ${l[3]}`" />
                    <path :d="thick" stroke-width="2.500" />
                    <circle cx="797" cy="492" r="6.500" stroke="#7a3fb4" />
                  </g>
                  <text transform="translate(800 496) rotate(-90)" class="rd" fill="#b060e0">J1</text>
                  <g class="pk">
                    <text transform="translate(492 470) rotate(-90)">150</text><text transform="translate(492 489) rotate(-90)">80</text><text transform="translate(492 508) rotate(-90)">60</text><text transform="translate(492 528) rotate(-90)">30</text>
                    <text transform="translate(1110 470) rotate(-90)">121</text><text transform="translate(1110 489) rotate(-90)">91</text><text transform="translate(1110 508) rotate(-90)">31</text><text transform="translate(1110 526) rotate(-90)">1</text>
                    <path d="M1087 539l3-5 3 5z" fill="none" stroke="#c08a90" />
                  </g>
                  <g fill="none" stroke="#2bb0d8">
                    <path d="M1115 293.500h85M1115 690.500h85M1194.500 293v397M479.500 690v86M1115.500 690v86M479 770.500h637" />
                    <path d="M1194.500 294l-7 39h15zM1194.500 690l-7-39h15zM480 770.500l39-7v15zM1115 770.500l-40-7v15z" />
                  </g>
                  <g class="dim">
                    <text transform="translate(1179 523) rotate(-90)">5</text><text transform="translate(1179 487) rotate(-90)">0</text>
                    <text transform="translate(1500 401) rotate(-90)">8</text><text transform="translate(1500 365) rotate(-90)">0</text>
                    <path d="M1147 467l31 15M1468 345l31 15" fill="none" stroke="#3aa4cc" />
                  </g>
                </g>
                <g shape-rendering="crispEdges">
                  <path d="M924.500 0V1200M0 654.500H3000" stroke="#e8e8e8" /><path d="M924.500 625V685M908 654.500H941" stroke="#8c8c00" />
                </g>
              </svg>
            </div>
          </section>
        </div>

        <div class="lower">
          <section class="cmd">
            <div class="dtitle"><span>Command</span><i class="rail"></i>
              <svg class="dbtn" viewBox="0 0 48 10"><path d="M1 8.500h6" stroke-width="2" /><path d="M19.500 4.500h5v4h-5zM22 4v-3h5v4h-2M21 1.500h6" /><path d="M38 1l7 7M45 1l-7 7" stroke-width="1.500" /></svg>
            </div>
            <div class="cbox">
              <textarea :value="log" aria-label="Command" readonly></textarea>
              <div class="scroll"><svg viewBox="0 0 12 8"><path d="M2 6l4-4 4 4" /></svg><i></i><svg viewBox="0 0 12 8"><path d="M2 2l4 4 4-4" /></svg></div>
            </div>
          </section>
          <section class="vpane">
            <div class="dtitle"><span>View</span><i class="rail"></i>
              <svg class="dbtn" viewBox="0 0 48 10"><path d="M1 8.500h6" stroke-width="2" /><path d="M19.500 4.500h5v4h-5zM22 4v-3h5v4h-2M21 1.500h6" /><path d="M38 1l7 7M45 1l-7 7" stroke-width="1.500" /></svg>
            </div>
            <div class="mini">
              <svg width="100%" height="100%" shape-rendering="crispEdges">
                <path d="M78.500 0V200" stroke="#a08c1c" />
                <g transform="translate(-1 1)">
                  <rect x="115.500" y="2.500" width="139" height="87" fill="none" stroke="#2f93b4" />
                  <rect v-for="(p, i) in miniPads" :key="i" :x="p.x + 0.500" :y="p.y + 0.500" :width="p.w" :height="p.h" fill="none" stroke="#fff" />
                </g>
              </svg>
            </div>
          </section>
        </div>
      </div>

      <section class="right">
        <div class="rtabs"><button class="on">Find</button><button>Options</button></div>
        <div class="dtitle"><span>Find</span><i class="rail"></i>
          <svg class="dbtn" viewBox="0 0 48 10"><path d="M1 8.500h6" stroke-width="2" /><path d="M19.500 4.500h5v4h-5zM22 4v-3h5v4h-2M21 1.500h6" /><path d="M38 1l7 7M45 1l-7 7" stroke-width="1.500" /></svg>
        </div>
        <div class="rbody">
          <fieldset>
            <legend>Design Object Find Filter</legend>
            <div class="onoff"><button>All On</button><button>All Off</button></div>
            <div class="opts">
              <label v-for="f in finds" :key="f.name" :class="{ dis: f.off }"><input v-model="f.on" type="checkbox" :disabled="f.off" />{{ f.name }}</label>
            </div>
            <div class="saved">
              <label><input type="checkbox" />By Saved Query</label>
              <span class="pick"><select disabled aria-label="Saved query"><option></option></select></span>
            </div>
          </fieldset>
          <button class="fbq">Find by Query...</button>
          <fieldset class="fbn">
            <legend>Find By Name</legend>
            <div class="nm"><span class="pick"><select aria-label="Object type"><option>Symbol (or Pin)</option></select></span><span class="pick sm"><select aria-label="Match by"><option>Name</option></select></span></div>
            <div class="nm"><label for="fn">&gt;</label><input id="fn" type="text" /><button>More...</button></div>
          </fieldset>
          <div class="meter"></div>
        </div>
      </section>
    </main>

    <footer class="status">
      <span class="cell a">Idle</span><span class="cell a"><i class="ok"></i></span><span class="cell b"></span><span class="cell a">Top</span>
      <span class="cell a">3765.0000, -545.0000</span>
      <span class="cell k"><button>mils</button></span><span class="cell k"><button>P</button></span><span class="cell k"><button>A</button></span>
      <span class="cell a"></span><span class="cell a"></span><span class="cell a">General edit</span><span class="cell b">Off</span>
      <span class="cell drc"><b>DRC</b>
        <span class="ime">
          <svg class="sg" viewBox="0 0 24 24"><g v-html="sogou"></g><text x="12" y="20" text-anchor="middle" font-size="22" font-weight="900" fill="#fff" font-family="Liberation Sans, sans-serif">S</text></svg>
          <em>英</em>
          <svg viewBox="0 0 16 16"><circle cx="4" cy="5" r="2" /><path d="M11 8h4c0 4-1 5-4 6l2-3z" /></svg>
          <svg viewBox="0 0 16 16"><rect x="5" y="0" width="6" height="10" rx="3" /><path d="M2 6v3c2 5 10 5 12 0V6h-2v3c-2 3-6 3-8 0V6zM7 12h2v4H7z" /></svg>
          <svg viewBox="0 0 16 16"><path d="M0 2h16v12H0zM2 4v8h12V4z" fill-rule="evenodd" /><path d="M3 5h2v2H3zM7 5h2v2H7zM11 5h2v2h-2zM3 8h2v1H3zM7 8h2v1H7zM11 8h2v1h-2zM4 10h8v1H4z" /></svg>
          <svg viewBox="0 0 16 16"><path d="M0 4l5-3c1 2 5 2 6 0l5 3-2 4-2-1v8H4V7L2 8z" /></svg>
          <svg viewBox="0 0 16 16"><rect x="1" y="1" width="6" height="6" rx="2" /><rect x="9" y="1" width="6" height="6" rx="3" /><rect x="1" y="9" width="6" height="6" rx="1" /><rect x="9" y="9" width="6" height="6" rx="1" /></svg>
        </span>
      </span>
    </footer>

    <footer class="taskbar">
      <button v-for="t in tasks" :key="t.n" :class="{ run: t.run, act: t.act }" :aria-label="t.n"><svg viewBox="0 0 24 24" v-html="t.s"></svg></button>
      <div class="tray">
        <svg v-for="(t, i) in tray" :key="i" viewBox="0 0 24 24" v-html="t"></svg>
        <span class="zh">中</span>
        <svg viewBox="0 0 24 24"><g v-html="sogou"></g><text x="12" y="20" text-anchor="middle" font-size="20" font-weight="900" fill="#fff" font-family="Liberation Sans, sans-serif">S</text></svg>
        <time>21:34 周一<br />2023/5/8</time>
        <svg class="wide" viewBox="0 0 24 24"><path d="M3 4h18v16H3z" fill="none" stroke="#fff" stroke-width="1.500" /><path d="M10 8l5 4-5 4z" fill="#fff" /></svg>
        <svg class="wide" viewBox="0 0 24 24"><path d="M3 3h18v15h-6l-3 4-3-4H3z" fill="none" stroke="#fff" stroke-width="1.500" /></svg>
      </div>
    </footer>
  </div>
</template>

<style>
body { margin: 0; }
</style>

<style scoped>
.app { display: flex; flex-direction: column; min-height: 100vh; background: #efefef; color: #000; font: 10px/14px "DejaVu Sans Mono", "Noto Sans CJK SC", monospace; overflow: hidden; }
.app * { box-sizing: border-box; }
.defs { position: absolute; }
button { font: inherit; color: inherit; padding: 0; border: 0; background: none; }
svg { display: block; }
.title { display: flex; align-items: center; height: 22px; background: #fff; font-family: "Noto Sans", sans-serif; }
.logo { width: 17px; height: 17px; margin: 0 4px 0 2px; }
h1 { flex: 1; margin: 0; font-size: 12px; line-height: 22px; font-weight: 400; }
.winbtns { display: flex; padding-right: 4px; }
.winbtns button { width: 45px; height: 20px; display: grid; place-items: center; }
.winbtns svg { width: 12px; height: 12px; fill: none; stroke: #000; }
.menu { display: flex; height: 26px; padding-left: 7px; gap: 17px; background: #fff; border-bottom: 3px solid #c00006; font: 12px/24px "Noto Sans", sans-serif; }
.menu a { color: #000; text-decoration: none; white-space: nowrap; }
.menu u { text-underline-offset: 2px; }
.brand { margin-left: auto; padding-right: 5px; font: 700 14px/22px "Open Sans", sans-serif; }
.brand i { position: relative; font-style: normal; }
.brand i::before { content: ""; position: absolute; left: 2px; top: 3px; width: 5px; height: 1px; background: #d02030; }
.bar { display: flex; height: 34px; border-bottom: 1px solid #b4b4b4; background: #f0f0f0; }
.group { display: flex; align-items: center; flex: none; border-right: 1px solid #b8b8b8; padding-left: 3px; }
.group:last-child { border-right: 0; }
.grip { width: 3px; height: 26px; margin-right: 3px; background: repeating-linear-gradient(#aaa 0 2px, transparent 2px 5px); }
.group button { width: 31px; height: 31px; display: grid; place-items: center; flex: none; }
.group svg { width: 22px; height: 22px; }
.group .narrow { width: 12px; }
.group .narrow svg { width: 16px; height: 16px; }
.group .hot { background: #cbe4f8; outline: 1px solid #8cc4ec; outline-offset: -1px; }
.main { display: flex; flex: 1; }
.side { width: 35px; border-right: 1px solid #b0b0b0; border-bottom: 1px solid #b0b0b0; }
.sgroup { padding-bottom: 2px; border-bottom: 1px solid #b8b8b8; }
.sgroup:last-child { border-bottom: 0; }
.hgrip { display: block; height: 3px; margin: 4px 4px 2px; background: repeating-linear-gradient(90deg, #aaa 0 2px, transparent 2px 4px); }
.sgroup button { display: grid; place-items: center; width: 33px; height: 30px; }
.sgroup svg { width: 22px; height: 22px; overflow: visible; }
.center { flex: 1; display: flex; flex-direction: column; min-width: 0; margin-right: 6px; }
.upper { display: flex; flex: 1; }
.dock { width: 279px; padding: 3px 14px 0 8px; display: flex; flex-direction: column; }
.dtitle { display: flex; align-items: center; height: 16px; padding-left: 8px; }
.rail { flex: 1; height: 4px; margin: 2px 12px 0 2px; background: #b5b5b5; }
.dbtn { width: 48px; height: 10px; fill: none; stroke: #000; flex: none; }
.dock .dbtn { margin-right: -2px; }
.gv { display: flex; align-items: center; gap: 8px; margin-top: 21px; }
.gv span { flex: 1; white-space: nowrap; }
.gv button, .onoff button, .fbq, .nm button { background: #e1e1e1; border: 1px solid #adadad; }
.gv button { width: 44px; height: 21px; }
.vw, .ws { display: flex; align-items: center; justify-content: space-between; margin-top: 7px; }
.combo { position: relative; width: 150px; height: 20px; }
.combo::after { content: ""; position: absolute; right: 5px; top: 8px; border: 4px solid transparent; border-top-color: #000; pointer-events: none; }
select { appearance: none; width: 100%; height: 100%; border: 1px solid #adadad; border-radius: 0; background: #e1e1e1; font: inherit; padding: 0 3px; color: inherit; }
.ws { margin-top: 11px; }
.ws .combo { width: 125px; }
.vis { border-collapse: collapse; table-layout: fixed; width: 258px; margin: 21px 0 0; }
.vis td, .vis th { padding: 0; text-align: center; font-weight: 400; height: 20px; vertical-align: middle; }
.vis th { height: 14px; text-decoration: underline; text-underline-offset: 2px; }
.vis .l { text-align: left; padding-left: 2px; white-space: nowrap; }
.vis .last td { height: 18px; }
.c0 { width: 105px; }
.c1 { width: 28px; }
.vis .rule td { height: 6px; }
hr { margin: 0 2px; border: 0; border-top: 1px solid #000; }
.cur { background: #dfdfdf; }
.sw { display: inline-block; vertical-align: middle; width: 16px; height: 16px; border: 1px solid #777; box-shadow: inset 0 0 0 1px #fff; }
input[type="checkbox"] { appearance: none; display: inline-grid; place-items: center; width: 13px; height: 13px; margin: 0; border: 1px solid #333; background: #fff; vertical-align: middle; flex: none; }
input[type="checkbox"]:checked::before { content: ""; width: 8px; height: 3px; margin-top: -3px; border: solid #444; border-width: 0 0 1px 1px; transform: rotate(-45deg); }
input[type="checkbox"]:disabled { border-color: #ccc; }
.vis label { display: flex; align-items: center; gap: 4px; }
.els { display: flex; align-items: center; gap: 4px; margin: auto 0 0 45px; }
.els + .dtitle { margin-top: 16px; }
.wsbox { height: 71px; margin: 5px 0 10px 1px; border: 1px solid #828282; background: #fff; resize: none; }
.design { flex: 1; display: flex; flex-direction: column; min-width: 0; }
.tabs { display: flex; align-items: flex-end; height: 29px; }
.tabs button { height: 18px; width: 81px; border: 1px solid #d9d9d9; border-bottom: 0; background: #f0f0f0; }
.tabs .on { width: 109px; height: 20px; background: #fff; }
.canvas { position: relative; flex: 1; margin-bottom: 3px; border: 1px solid #fff; border-width: 1px 2px 2px 1px; background: #000; overflow: hidden; }
.canvas > svg, .mini > svg { position: absolute; inset: 0; }
.ol { fill: none; stroke: #2f93b4; }
.rd { font: 10px "DejaVu Sans Mono", monospace; fill: #c4b4ec; }
.pk { font: 8px "DejaVu Sans Mono", monospace; fill: #c08a90; }
.dim { font: 300 45px Lato, sans-serif; fill: #3296bc; }
.lower { display: flex; gap: 9px; height: 126px; padding: 5px 0 2px 2px; }
.cmd { flex: 1; display: flex; flex-direction: column; }
.vpane { width: 371px; display: flex; flex-direction: column; }
.lower .dtitle { height: 20px; padding: 0 0 1px 13px; flex: none; }
.lower .dbtn { margin-right: 6px; }
.cbox { display: flex; flex: 1; border: 1px solid #646464; border-right: 0; }
.cbox textarea { flex: 1; border: 0; border-right: 1px solid #888; margin: 0; padding: 2px 1px; resize: none; outline: 0; overflow: hidden; background: #fff; font: 11px/13px "Liberation Sans", sans-serif; }
.scroll { width: 17px; display: flex; flex-direction: column; align-items: center; padding: 5px 0 3px; }
.scroll svg { width: 12px; height: 8px; fill: none; stroke: #555; stroke-width: 2; }
.scroll i { width: 15px; height: 17px; margin: auto 0 5px; background: #cdcdcd; }
.mini { position: relative; flex: 1; background: #000; border: 2px solid #fff; outline: 1px solid #8c8c8c; outline-offset: -1px; border-right-color: #d8d8d8; }
.right { width: 235px; display: flex; flex-direction: column; }
.rtabs { display: flex; align-items: flex-end; height: 20px; border-bottom: 1px solid #ccc; }
.rtabs button { height: 17px; width: 63px; border: 1px solid #d9d9d9; border-bottom: 0; }
.rtabs .on { width: 49px; height: 19px; background: #fff; }
.right .dtitle { height: 20px; padding-left: 16px; }
.right .dbtn { margin-right: 7px; }
.rbody { position: relative; flex: 1; border: 1px solid #828282; padding: 23px 36px 0 8px; font: 11px/13px "Liberation Sans", sans-serif; }
fieldset { min-width: 0; margin: 0; padding: 8px 3px 13px 6px; border: 1px solid #dcdcdc; }
legend { padding: 0 2px; margin-left: 0; }
.onoff { display: flex; gap: 13px; padding-left: 1px; }
.onoff button { height: 17px; width: 43px; line-height: 13px; }
.onoff button:last-child { width: 47px; }
.opts { display: grid; grid-template-columns: 84px 1fr; padding: 2px 0 3px 6px; margin: 0 -3px 0 -6px; border-bottom: 1px solid #dcdcdc; }
.opts label { display: flex; align-items: center; gap: 3px; height: 24px; white-space: nowrap; }
.opts .dis { color: #888; }
.saved { display: flex; flex-direction: column; gap: 7px; padding-top: 14px; }
.saved label { display: flex; align-items: center; gap: 3px; }
.pick { position: relative; width: 122px; height: 21px; }
.pick::after { content: ""; position: absolute; right: 6px; top: 6px; width: 5px; height: 5px; border: solid #555; border-width: 0 1px 1px 0; transform: rotate(45deg); pointer-events: none; }
.saved select { background: #ccc; border-color: #bfbfbf; }
.saved .pick::after { border-color: #999; }
.fbq { display: block; width: 124px; height: 22px; margin: 16px 0 30px 8px; }
.fbn { padding: 5px 3px 6px 6px; }
.nm { display: flex; gap: 4px; align-items: center; margin-bottom: 4px; }
.nm .sm { width: 52px; }
.nm label { width: 10px; }
.nm input { width: 108px; height: 22px; border: 1px solid #777; box-shadow: inset 0 0 0 1px #fff, inset 0 0 0 2px #aaa; background: #fff; }
.nm button { width: 48px; height: 22px; margin-left: 1px; }
.meter { position: absolute; right: 2px; bottom: 90px; width: 7px; height: 56px; border-radius: 4px; background: linear-gradient(#8c8c8c 60%, #28c050 64%, #6ee88a); }
.status { display: flex; height: 29px; padding: 4px 0 2px; }
.cell { display: flex; align-items: center; flex: none; border-right: 1px solid #d4d4d4; padding-left: 4px; white-space: nowrap; }
.a { width: 167px; }
.a:first-child { padding-left: 2px; width: 165px; }
.b { width: 166px; }
.ok { width: 161px; height: 23px; background: #0f0; }
.k { width: 29px; padding-left: 5px; }
.k button { width: 22px; height: 21px; border: 1px solid #adadad; background: #e1e1e1; overflow: hidden; display: flex; justify-content: center; align-items: center; }
.drc { position: relative; flex: 1; border: 0; }
.drc b { flex: 1; margin-right: 175px; height: 23px; line-height: 22px; font-weight: 400; background: #f00; color: #400; }
.ime { position: absolute; right: 54px; top: -1px; display: flex; align-items: center; gap: 8px; width: 178px; height: 26px; padding-right: 5px; background: #fff; border: 1px solid #c8d8ea; border-radius: 3px; }
.ime svg { width: 16px; height: 16px; fill: #1a6fd0; flex: none; }
.ime .sg { width: 31px; height: 31px; margin: 0 -1px; }
.ime em { font: 700 15px/20px "Noto Sans CJK SC", sans-serif; color: #1a6fd0; }
.taskbar { display: flex; height: 40px; background: linear-gradient(90deg, #24343c, #283338 50%, #2a2f33 66%, #1d2b33); }
.taskbar button { width: 49px; display: grid; place-items: center; flex: none; }
.taskbar button:nth-child(-n+3) { width: 48px; }
.taskbar button:nth-child(3) { width: 50px; }
.taskbar svg { width: 24px; height: 24px; }
.run { background: linear-gradient(#76b9ed, #76b9ed) bottom / 40px 2px no-repeat; }
.taskbar .act { background: linear-gradient(#76b9ed, #76b9ed) bottom / 100% 2px no-repeat, #55666b; }
.tray { display: flex; align-items: center; margin-left: auto; gap: 6px; color: #fff; }
.tray svg { width: 18px; height: 18px; }
.zh { font: 15px/20px "Noto Sans CJK SC", sans-serif; }
.tray time { width: 80px; text-align: center; font: 12px/18px "Noto Sans", "Noto Sans CJK SC", sans-serif; }
.tray .wide { width: 20px; height: 20px; margin: 0 11px 0 4px; }
.tray .wide:last-child { margin-right: 22px; }
</style>
